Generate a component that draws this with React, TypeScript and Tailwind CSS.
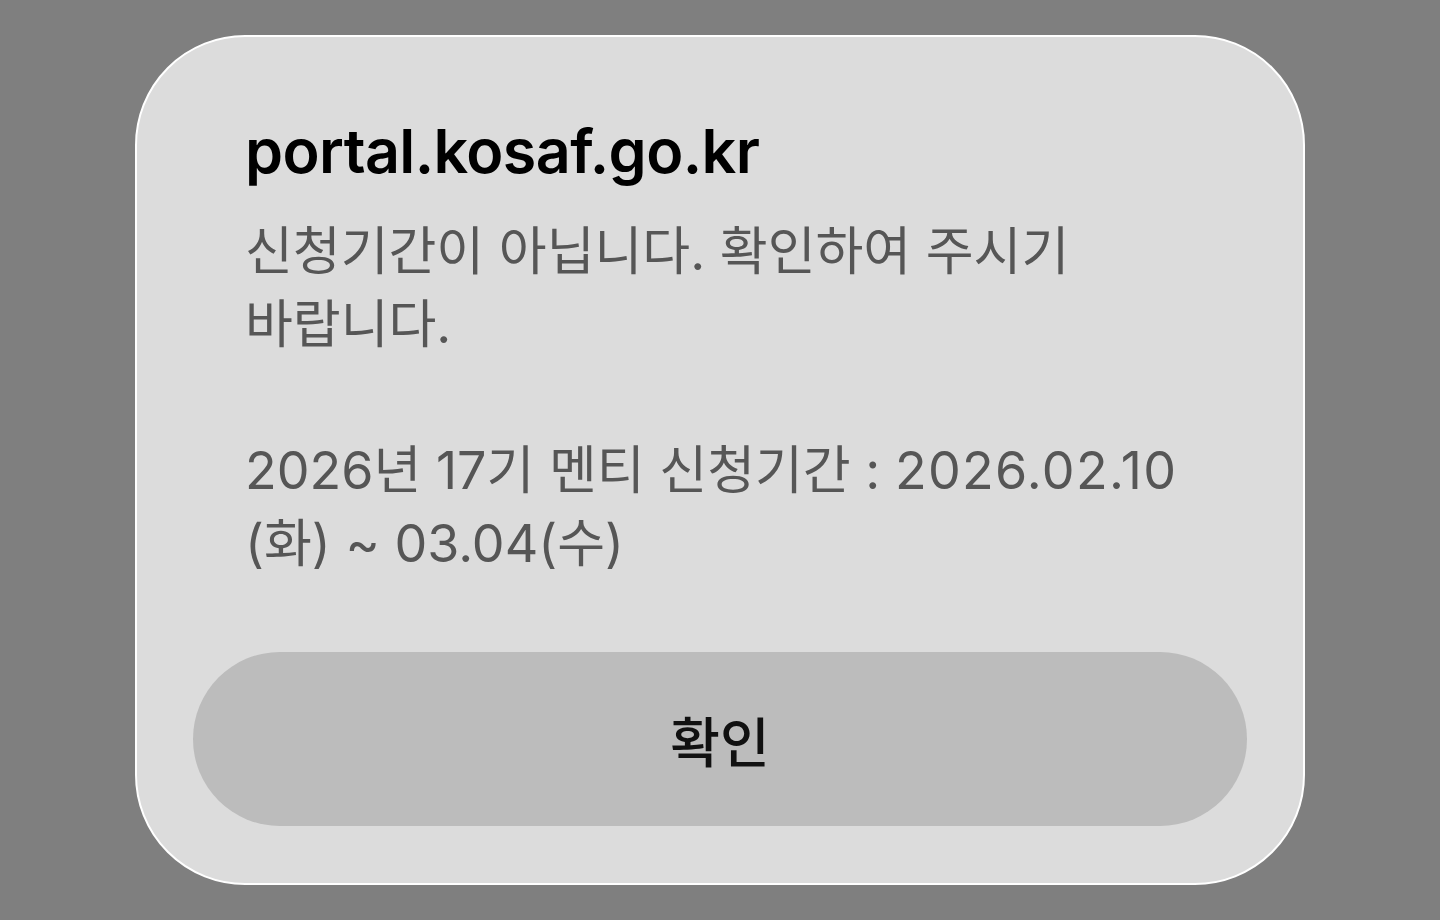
export default function App() {
  return (
    <div className="min-h-screen w-full bg-[#7f7f7f] flex items-center justify-center font-['Inter','Noto_Sans_CJK_KR',sans-serif]">
      <div className="w-[1170px] h-[850px] rounded-[110px] bg-[#dcdcdc] border-2 border-white flex flex-col pt-[84px] pb-[57px] px-[56px]">
        <div className="px-[52px]">
          <h1 className="text-[61px] leading-none font-semibold text-black tracking-[-0.01em]">
            portal.kosaf.go.kr
          </h1>
          <p className="mt-[33px] text-[52px] leading-[73px] text-[#565656] whitespace-nowrap">
            신청기간이 아닙니다. 확인하여 주시기
            <br />
            바랍니다.
            <br />
            <br />
            2026년 17기 멘티 신청기간 : <span className="tracking-[0.025em]">2026.02.10</span>
            <br />
            (화) ~ 03.04(수)
          </p>
        </div>
        <button className="mt-auto h-[174px] w-full rounded-full bg-[#bcbcbc] text-[54px] font-medium text-[#111111] font-['Noto_Sans_CJK_KR',sans-serif]">
          확인
        </button>
      </div>
    </div>
  );
}
